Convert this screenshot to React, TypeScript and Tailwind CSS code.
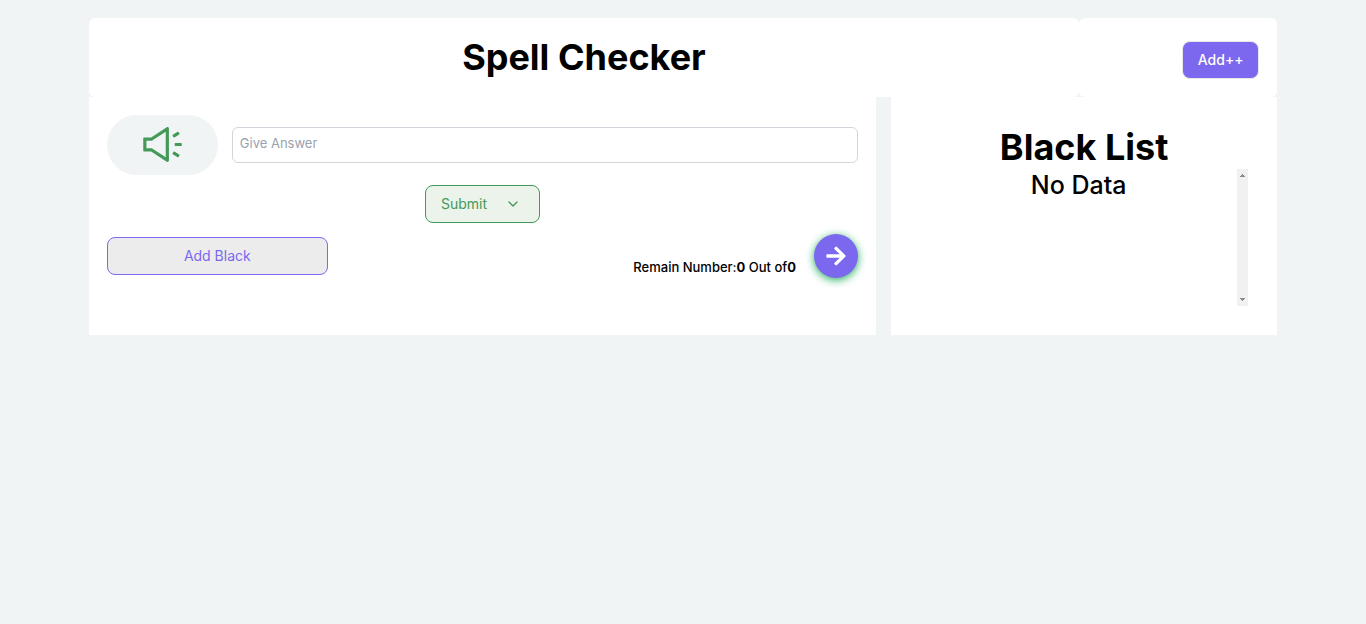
import { AiOutlineSound } from "react-icons/ai";
import { FaArrowRight } from "react-icons/fa";
import { FiChevronDown } from "react-icons/fi";

function ScrollTrack() {
  return (
    <div
      aria-hidden="true"
      className="flex w-[11px] shrink-0 flex-col items-center justify-between bg-[#f1f1f1] py-[5px] text-[#8a8a8a]"
    >
      <svg width="5" height="3" viewBox="0 0 5 3" fill="currentColor" shapeRendering="crispEdges">
        <path d="M2 0h1v1h1v1h1v1H0V2h1V1h1z" />
      </svg>
      <svg width="5" height="3" viewBox="0 0 5 3" fill="currentColor" shapeRendering="crispEdges">
        <path d="M0 0h5v1H4v1H3v1H2V2H1V1H0z" />
      </svg>
    </div>
  );
}

export default function App() {
  return (
    <div className="min-h-screen bg-[#f0f4f5] pt-[18px] font-['Inter',sans-serif] text-black">
      <div className="mx-auto w-[87%]">
        <header className="grid grid-cols-6">
          <div className="col-span-5 flex h-[79px] items-center justify-center rounded-md bg-white pb-[2px]">
            <h1 className="text-4xl font-bold">Spell Checker</h1>
          </div>
          <div className="flex h-[79px] items-center justify-end rounded-md bg-white pt-1 pr-[18px]">
            <button
              type="button"
              className="h-[38px] w-[77px] rounded-lg border border-gray-200 bg-[#7b68ee] text-sm font-medium text-white"
            >
              Add++
            </button>
          </div>
        </header>

        <main className="grid grid-cols-[787fr_386fr] gap-[15px]">
          <section className="h-[238px] bg-white p-[18px]">
            <div className="flex items-center gap-[14px]">
              <button
                type="button"
                aria-label="Play word"
                className="flex h-[60px] w-[111px] items-center justify-center rounded-full bg-[#f0f4f5] pb-[2px] text-[#449958]"
              >
                <AiOutlineSound size={45} />
              </button>
              <input
                type="text"
                aria-label="Give Answer"
                placeholder="Give Answer"
                className="h-9 min-w-0 flex-1 rounded-md border border-gray-300 px-[7px] pb-1 text-[13px] outline-none placeholder:text-gray-400"
              />
            </div>
            <div className="mt-[10px] flex justify-center">
              <button
                type="button"
                className="flex h-[38px] w-[115px] items-center justify-between rounded-lg border border-[#449958] bg-[#ebf3eb] pr-[18px] pl-[15px] text-sm text-[#449958]"
              >
                Submit
                <FiChevronDown size={16} />
              </button>
            </div>
            <div className="mt-[11px] flex items-start justify-between">
              <button
                type="button"
                className="mt-[3px] h-[38px] w-[221px] rounded-lg border border-[#7b68ee] bg-[#ececec] text-sm text-[#7b68ee]"
              >
                Add Black
              </button>
              <div className="flex items-end gap-[18px]">
                <p className="text-[13px] leading-[22px] font-medium">
                  Remain Number:<b>0</b> Out of<b>0</b>
                </p>
                <button
                  type="button"
                  aria-label="Next word"
                  className="flex size-11 items-center justify-center rounded-full bg-[#7b68ee] text-white shadow-[0_2px_8px_#27ae60]"
                >
                  <FaArrowRight size={22} />
                </button>
              </div>
            </div>
          </section>

          <section className="bg-white px-[29px] pt-[30px] text-center">
            <h2 className="text-4xl font-bold">Black List</h2>
            <div className="mt-[2px] flex h-[137px]">
              <p className="flex-1 text-[25px] leading-8 font-medium">No Data</p>
              <ScrollTrack />
            </div>
          </section>
        </main>
      </div>
    </div>
  );
}
